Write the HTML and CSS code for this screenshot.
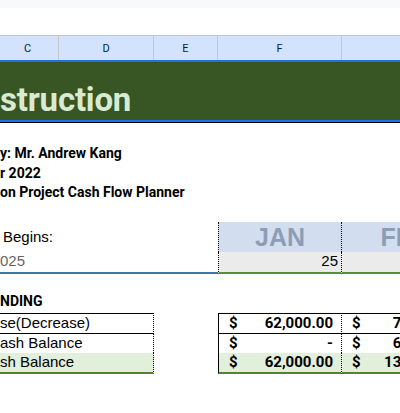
FILE: index.html
```html
<!DOCTYPE html>
<html>
<head>
<meta charset="utf-8">
<link rel="stylesheet" href="styles.css">
</head>
<body>
<div class="page">
  <div class="topbar"></div>
  <div class="spacer"></div>
  <div class="colhdr">
    <div class="ch c1">C</div>
    <div class="ch c2">D</div>
    <div class="ch c3">E</div>
    <div class="ch c4">F</div>
    <div class="ch c5"></div>
  </div>
  <div class="selline"></div>
  <div class="banner"><span class="title">struction</span></div>
  <div class="bannerline"></div>
  <div class="blank r20"></div>
  <div class="info">
    <div class="iline">y: Mr. Andrew Kang</div>
    <div class="iline">r 2022</div>
    <div class="iline">on Project Cash Flow Planner</div>
  </div>
  <div class="blank r20"></div>
  <div class="grow hrow">
    <div class="lbl begins">Begins:</div>
    <div class="gap"></div>
    <div class="month jan">JAN</div>
    <div class="month feb">FEB</div>
  </div>
  <div class="grow yrow">
    <div class="lbl year">025</div>
    <div class="gap"></div>
    <div class="num n1">25</div>
    <div class="num n2"></div>
  </div>
  <div class="pendrow"><span class="pending">NDING</span></div>
  <div class="grow trow t1">
    <div class="tl">se(Decrease)</div>
    <div class="gap"></div>
    <div class="tv v1"><span>$</span><span>62,000.00</span></div>
    <div class="tv v2"><span>$</span><span>72,000.00</span></div>
  </div>
  <div class="grow trow t2">
    <div class="tl">ash Balance</div>
    <div class="gap"></div>
    <div class="tv v1"><span>$</span><span class="dash">-</span></div>
    <div class="tv v2"><span>$</span><span>62,000.00</span></div>
  </div>
  <div class="grow trow t3">
    <div class="tl">sh Balance</div>
    <div class="gap"></div>
    <div class="tv v1"><span>$</span><span>62,000.00</span></div>
    <div class="tv v2"><span>$</span><span>134,000.00</span></div>
  </div>
</div>
</body>
</html>
```
FILE: styles.css
```css
html, body {
  margin: 0;
  padding: 0;
  background: #ffffff;
  overflow: hidden;
}
body {
  width: 400px;
  height: 413px;
  font-family: "Liberation Sans", Arial, sans-serif;
  color: #000;
}
.page {
  width: 469px;
  display: flex;
  flex-direction: column;
}
.topbar {
  height: 8px;
  background: #f8f9fa;
}
.spacer {
  height: 27px;
}
.colhdr {
  height: 24px;
  border-top: 1px solid #c4c7c5;
  background: #d3e3fd;
  display: grid;
  grid-template-columns: 59px 95px 64px 124px 127px;
  font-family: Roboto, "Liberation Sans", sans-serif;
  font-size: 11px;
  color: #041e49;
}
.ch {
  display: flex;
  align-items: center;
  justify-content: center;
  border-right: 1px solid #c4c7c5;
}
.c1 { padding-right: 3px; }
.selline {
  height: 2px;
  background: #1a73e8;
}
.banner {
  height: 54px;
  padding-bottom: 4px;
  background: #375623;
  display: flex;
  align-items: flex-end;
}
.title {
  font-family: Roboto, "Liberation Sans", sans-serif;
  font-weight: bold;
  font-size: 33px;
  line-height: 33px;
  letter-spacing: -0.2px;
  color: #d9ead3;
}
.bannerline {
  height: 2px;
  background: #1a73e8;
  border-bottom: 1px solid #000;
}
.blank.r20 { height: 20px; }
.info {
  display: flex;
  flex-direction: column;
  font-family: Roboto, "Liberation Sans", sans-serif;
  font-weight: bold;
  font-size: 14px;
}
.iline {
  height: 19.7px;
  line-height: 20px;
  white-space: nowrap;
}
.grow {
  display: grid;
  grid-template-columns: 154px 64px 124px 127px;
}
.hrow { height: 30px; }
.lbl {
  font-size: 15px;
  display: flex;
  align-items: center;
  white-space: nowrap;
}
.begins { padding-left: 3px; padding-bottom: 1px; }
.year {
  color: #666666;
  border-bottom: 2px solid #3d75a6;
  padding-bottom: 3px;
}
.yrow .gap { border-bottom: 2px solid #3d75a6; }
.month {
  background: #d2deef;
  color: #8e9db6;
  font-weight: bold;
  font-size: 25px;
  display: flex;
  align-items: center;
  justify-content: center;
}
.jan {
  border-left: 1px dotted #000;
  border-right: 1px dotted #000;
}
.yrow { height: 22px; }
.num {
  background: #ebebeb;
  font-size: 15px;
  text-align: right;
  line-height: 18px;
  padding-right: 3px;
  border-bottom: 2px solid #5b8e3a;
}
.n1 {
  border-left: 1px dotted #000;
  border-right: 1px dotted #000;
}
.pendrow {
  height: 39px;
  display: flex;
  align-items: flex-end;
  font-weight: bold;
  font-size: 14px;
  font-family: Roboto, "Liberation Sans", sans-serif;
}
.pending {
  line-height: 20px;
  padding-bottom: 2px;
}
.trow {
  height: 19px;
  font-size: 15px;
  line-height: 18px;
}
.tl {
  white-space: nowrap;
  border-right: 1px dotted #000;
}
.tv {
  display: flex;
  justify-content: space-between;
  padding: 0 8px 0 10px;
  font-family: Roboto, "Liberation Sans", sans-serif;
  font-weight: bold;
  font-size: 15px;
}
.v1 {
  border-left: 1px solid #000;
  border-right: 1px dotted #000;
}
.t1 {
  height: 21px;
}
.t1 .tl, .t1 .tv {
  border-top: 1px solid #000;
  border-bottom: 1px solid #000;
}
.t3 {
  height: 21px;
}
.t3 .tl, .t3 .tv {
  background: #e2efda;
  border-bottom: 2px solid #538135;
}
```
